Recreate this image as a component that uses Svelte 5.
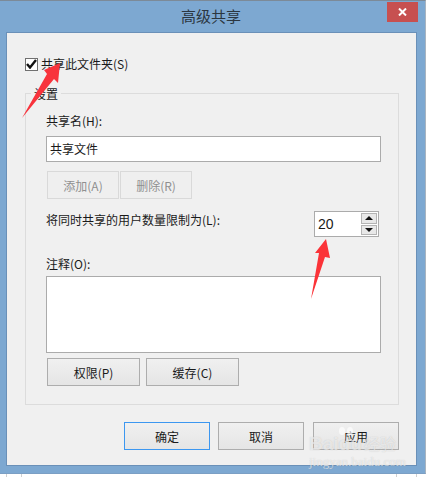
<script>
  let limit = 20;
</script>

<div class="page">
  <div class="window">
    <div class="titlebar">
      <span class="title">高级共享</span>
      <button class="close" aria-label="关闭">
        <svg width="9" height="8" viewBox="0 0 9 8"><path d="M1 .5 L8 7.5 M8 .5 L1 7.5" stroke="#fff" stroke-width="2" fill="none" /></svg>
      </button>
    </div>

    <div class="client">
      <label class="share-check">
        <span class="box">
          <svg width="11" height="10" viewBox="0 0 11 10"><path d="M1 5 L4 8.5 L10 1" stroke="#111" stroke-width="2.4" fill="none" /></svg>
        </span>
        共享此文件夹(S)
      </label>

      <div class="group">
        <span class="legend">设置</span>
        <div class="field-label">共享名(H):</div>
        <div class="input name-input">共享文件</div>

        <div class="row small-btns">
          <button class="btn add" disabled>添加(A)</button>
          <button class="btn add" disabled>删除(R)</button>
        </div>

        <div class="limit-row">
          <span>将同时共享的用户数量限制为(L):</span>
          <div class="spin">
            <span class="spin-value">{limit}</span>
            <div class="spin-btns">
              <span class="spin-btn"><i class="up"></i></span>
              <span class="spin-btn"><i class="down"></i></span>
            </div>
          </div>
        </div>

        <div class="field-label notes-label">注释(O):</div>
        <div class="input notes"></div>

        <div class="row perm-btns">
          <button class="btn wide">权限(P)</button>
          <button class="btn wide">缓存(C)</button>
        </div>
      </div>

      <div class="footer">
        <button class="btn foot primary">确定</button>
        <button class="btn foot">取消</button>
        <button class="btn foot apply">应用</button>
      </div>
    </div>
  </div>

  <div class="below">
    <span class="tick t1"></span>
    <span class="tick t2"></span>
    <span class="tick t3"></span>
    <span class="tick t4"></span>
  </div>

  <svg class="arrows" width="426" height="477" viewBox="0 0 426 477">
    <path d="M60 63 L44 70 L47 74 L22 118 L54 79 L58 83 Z" fill="#f8333c" />
    <path d="M326 239 L315 253 L319 253 L311 299 L325 257 L330 258 Z" fill="#fb3338" />
    <g fill="#fff" fill-opacity="0.65">
      <ellipse cx="342" cy="431" rx="3" ry="4" />
      <ellipse cx="350" cy="431" rx="3" ry="4" />
    </g>
  </svg>

  <div class="watermark">
    <div class="wm-main">Baidu<span class="wm-cn">经验</span></div>
    <div class="wm-sub">jingyan.baidu.com</div>
  </div>
</div>

<style>
  :global(body) {
    margin: 0;
    background: #fff;
  }
  .page {
    position: relative;
    width: 426px;
    height: 477px;
    overflow: hidden;
    font-family: "Noto Sans CJK SC", "Liberation Sans", sans-serif;
    font-size: 12px;
    color: #1a1a1a;
  }
  .window {
    box-sizing: border-box;
    width: 426px;
    height: 474px;
    background: #7da8d1;
    border-top: 1px solid #7c8a98;
    border-right: 1px solid #a8b4c0;
    border-bottom: 1px solid #7b9fc4;
    padding: 0 8px 7px 6px;
    display: flex;
    flex-direction: column;
  }
  .titlebar {
    height: 31px;
    flex: none;
    display: flex;
    justify-content: center;
    position: relative;
  }
  .title {
    font-size: 15px;
    line-height: 30px;
    padding-right: 1px;
    color: #2b3640;
  }
  .close {
    position: absolute;
    top: 1px;
    right: -1px;
    width: 31px;
    height: 20px;
    border: 0;
    padding: 0;
    background: #c75050;
    display: flex;
    align-items: center;
    justify-content: center;
  }
  .client {
    flex: 1;
    background: #f0f0f0;
    border: 1px solid #6a90b8;
    padding: 0 17px 0 18px;
    display: flex;
    flex-direction: column;
  }
  .share-check {
    display: flex;
    align-items: center;
    gap: 3px;
    height: 16px;
    margin-top: 23px;
    line-height: 16px;
  }
  .box {
    box-sizing: border-box;
    width: 13px;
    height: 13px;
    border: 1px solid #707070;
    background: #fff;
    display: flex;
    align-items: center;
    justify-content: center;
  }
  .group {
    position: relative;
    box-sizing: border-box;
    margin-top: 21px;
    height: 312px;
    border: 1px solid #dcdcdc;
    padding: 0 17px 0 20px;
  }
  .legend {
    position: absolute;
    top: -9px;
    left: 5px;
    padding: 0 3px;
    line-height: 17px;
    background: #f0f0f0;
  }
  .field-label {
    margin-top: 18px;
    line-height: 17px;
  }
  .input {
    box-sizing: border-box;
    background: #fff;
    border: 1px solid #ababab;
  }
  .name-input {
    margin-top: 7px;
    height: 26px;
    line-height: 24px;
    padding-left: 3px;
  }
  .row {
    display: flex;
  }
  .small-btns {
    margin-top: 9px;
    margin-left: 1px;
    gap: 1px;
  }
  .btn {
    box-sizing: border-box;
    height: 28px;
    padding: 0;
    font: inherit;
    color: #1a1a1a;
    border: 1px solid #adadad;
    background: linear-gradient(#f0f0f0, #e5e5e5);
  }
  .add {
    width: 72px;
    color: #8f8f8f;
    border-color: #d9d9d9;
    background: #efefef;
  }
  .limit-row {
    display: flex;
    justify-content: space-between;
    align-items: flex-start;
    margin-top: 12px;
    line-height: 17px;
    padding-right: 1px;
  }
  .spin {
    box-sizing: border-box;
    width: 65px;
    height: 26px;
    margin-right: 1px;
    background: #fff;
    border: 1px solid #ababab;
    display: flex;
    justify-content: space-between;
    font-family: "Liberation Sans", sans-serif;
    font-size: 14px;
  }
  .spin-value {
    line-height: 25px;
    padding-left: 3px;
  }
  .spin-btns {
    width: 16px;
    margin: 1px 1px 1px 0;
    display: flex;
    flex-direction: column;
    gap: 1px;
  }
  .spin-btn {
    flex: 1;
    box-sizing: border-box;
    border: 1px solid #b4b4b4;
    background: #e8e8e8;
    display: flex;
    align-items: center;
    justify-content: center;
  }
  .up,
  .down {
    width: 0;
    height: 0;
    border-left: 4px solid transparent;
    border-right: 4px solid transparent;
  }
  .up {
    border-bottom: 4px solid #111;
  }
  .down {
    border-top: 4px solid #111;
  }
  .notes-label {
    margin-top: 18px;
  }
  .notes {
    margin-top: 4px;
    height: 77px;
  }
  .perm-btns {
    margin-top: 5px;
    margin-left: 1px;
    gap: 6px;
  }
  .wide {
    width: 93px;
  }
  .footer {
    display: flex;
    gap: 8px;
    margin-top: 17px;
    margin-left: 99px;
  }
  .foot {
    width: 86px;
    flex: none;
  }
  .apply {
    margin-left: 1px;
  }
  .primary {
    border-color: #3c97f0;
  }
  .below {
    position: relative;
    height: 3px;
  }
  .tick {
    position: absolute;
    top: 0;
    width: 1px;
    height: 3px;
    background: #d0d0d0;
  }
  .t1 { left: 6px; }
  .t2 { left: 21px; }
  .t3 { left: 396px; }
  .t4 { left: 416px; }
  .arrows {
    position: absolute;
    top: 0;
    left: 0;
    pointer-events: none;
  }
  .watermark {
    position: absolute;
    left: 309px;
    top: 432px;
    color: rgba(255, 255, 255, 0.6);
    text-shadow: 0 0 1px rgba(130, 130, 130, 0.4);
    pointer-events: none;
  }
  .wm-main {
    font-family: "Liberation Sans", sans-serif;
    font-size: 19px;
    font-weight: 700;
    line-height: 22px;
    white-space: nowrap;
  }
  .wm-cn {
    font-family: "Noto Sans CJK SC", sans-serif;
    font-size: 16px;
    font-weight: 400;
    margin-left: 2px;
  }
  .wm-sub {
    font-family: "Liberation Serif", serif;
    font-size: 13px;
    line-height: 13px;
    margin-top: 0;
    white-space: nowrap;
  }
</style>
